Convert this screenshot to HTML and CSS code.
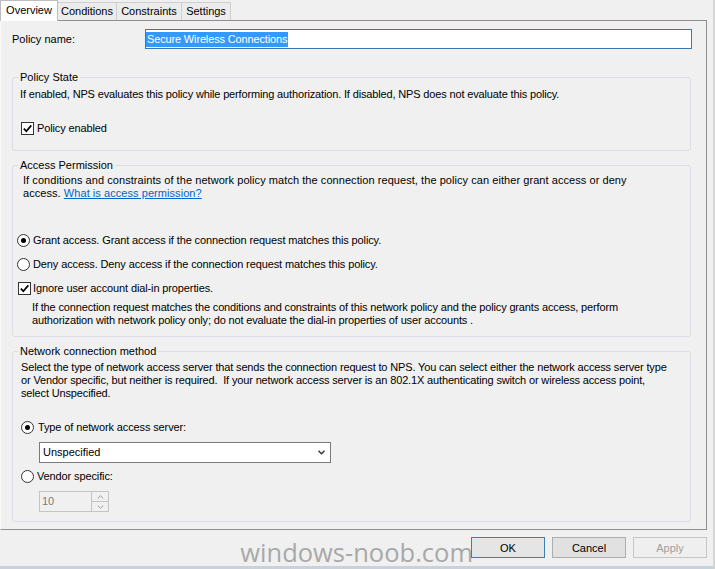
FILE: index.html
```html
<!DOCTYPE html>
<html>
<head>
<meta charset="utf-8">
<link rel="stylesheet" href="styles.css">
</head>
<body>
<div class="window">
  <div class="tabs">
    <div class="tab active t-overview">Overview</div>
    <div class="tab t-conditions">Conditions</div>
    <div class="tab t-constraints">Constraints</div>
    <div class="tab t-settings">Settings</div>
  </div>
  <div class="panel">
    <div class="name-row">
      <div class="name-label">Policy name:</div>
      <div class="textbox"><span class="sel">Secure Wireless Connections</span></div>
    </div>

    <fieldset class="group g-state">
      <legend>Policy State</legend>
      <div class="desc d-state">If enabled, NPS evaluates this policy while performing authorization. If disabled, NPS does not evaluate this policy.</div>
      <div class="opt o-enabled">
        <span class="check"><svg width="11" height="11" viewBox="0 0 11 11"><polyline points="1.8,5.6 4.3,8.2 9.3,2.4" fill="none" stroke="#000" stroke-width="1.7"/></svg></span>
        <span class="opt-label l3">Policy enabled</span>
      </div>
    </fieldset>

    <fieldset class="group g-access">
      <legend>Access Permission</legend>
      <div class="desc d-access">If conditions and constraints of the network policy match the connection request, the policy can either grant access or deny<br>access. <a class="link" href="#">What is access permission?</a></div>
      <div class="opt o-grant">
        <span class="radio on"></span>
        <span class="opt-label l3">Grant access. Grant access if the connection request matches this policy.</span>
      </div>
      <div class="opt o-deny">
        <span class="radio"></span>
        <span class="opt-label l3">Deny access. Deny access if the connection request matches this policy.</span>
      </div>
      <div class="opt o-ignore">
        <span class="check"><svg width="11" height="11" viewBox="0 0 11 11"><polyline points="1.8,5.6 4.3,8.2 9.3,2.4" fill="none" stroke="#000" stroke-width="1.7"/></svg></span>
        <span class="opt-label l2">Ignore user account dial-in properties.</span>
      </div>
      <div class="desc d-ignore">If the connection request matches the conditions and constraints of this network policy and the policy grants access, perform<br>authorization with network policy only; do not evaluate the dial-in properties of user accounts .</div>
    </fieldset>

    <fieldset class="group g-network">
      <legend>Network connection method</legend>
      <div class="desc d-network">Select the type of network access server that sends the connection request to NPS. You can select either the network access server type<br>or Vendor specific, but neither is required.&nbsp; If your network access server is an 802.1X authenticating switch or wireless access point,<br>select Unspecified.</div>
      <div class="opt o-type">
        <span class="radio on"></span>
        <span class="opt-label l4">Type of network access server:</span>
      </div>
      <div class="select">
        <span>Unspecified</span>
        <svg width="7" height="5" viewBox="0 0 7 5"><polyline points="0.5,0.8 3.5,3.8 6.5,0.8" fill="none" stroke="#333" stroke-width="1.4"/></svg>
      </div>
      <div class="opt o-vendor">
        <span class="radio"></span>
        <span class="opt-label l3">Vendor specific:</span>
      </div>
      <div class="spin">
        <div class="spin-val">10</div>
        <div class="spin-btns">
          <div class="spin-btn"><svg width="7" height="4" viewBox="0 0 7 4"><polyline points="0.8,3.4 3.5,0.8 6.2,3.4" fill="none" stroke="#9a9a9a" stroke-width="1"/></svg></div>
          <div class="spin-btn"><svg width="7" height="4" viewBox="0 0 7 4"><polyline points="0.8,0.6 3.5,3.2 6.2,0.6" fill="none" stroke="#9a9a9a" stroke-width="1"/></svg></div>
        </div>
      </div>
    </fieldset>
  </div>
  <div class="footer">
    <div class="watermark">windows-noob.com</div>
    <button class="btn default">OK</button>
    <button class="btn">Cancel</button>
    <button class="btn disabled">Apply</button>
  </div>
</div>
</body>
</html>
```

FILE: styles.css
```css
* { box-sizing: border-box; }

body {
  margin: 0;
  background: #f0f0f0;
  font-family: "Liberation Sans", Arial, sans-serif;
  font-size: 11px;
  line-height: 13px;
  color: #000;
}

.window {
  width: 715px;
  height: 569px;
  border-right: 2px solid #d6d6d6;
  border-bottom: 3px solid #c9d1db;
}

/* Tabs */
.tabs {
  display: flex;
  align-items: flex-end;
  height: 20px;
  position: relative;
  z-index: 1;
}

.tab {
  height: 18px;
  border: 1px solid #cfcfcf;
  border-bottom: none;
  background: #ececec;
  text-align: center;
  line-height: 17px;
  margin-left: -1px;
  white-space: nowrap;
}

.tab.active {
  height: 21px;
  margin-bottom: -1px;
  margin-left: 0;
  background: #fff;
  border-color: #bdbdbd;
  line-height: 19px;
  z-index: 2;
}

.t-overview { width: 58px; }
.t-conditions { width: 60px; }
.t-constraints { width: 66px; }
.t-settings { width: 50px; }

/* Panel */
.panel {
  width: 707px;
  height: 510px;
  border-top: 1px solid #8e9096;
  border-right: 1px solid #8e9096;
  border-bottom: 1px solid #8e9096;
  border-left: 1px solid #fafafa;
  padding: 8px 0 0 11px;
}

.name-row {
  display: flex;
  align-items: center;
  height: 20px;
}

.name-label { width: 133px; }

.textbox {
  width: 547px;
  height: 20px;
  border: 1px solid #3a78ae;
  background: #fff;
  display: flex;
  align-items: center;
  padding-left: 0;
}

.sel {
  background: #3399ff;
  color: #fff;
  line-height: 15px;
  padding: 0 1px;
  letter-spacing: -0.15px;
}

/* Group boxes */
.group {
  width: 679px;
  margin: 0;
  padding: 0;
  border: 1px solid #d8dee3;
  border-radius: 3px;
  min-inline-size: 0;
}

.group legend {
  margin-left: 5px;
  padding: 0 2px;
  line-height: 13px;
}

.g-state { margin-top: 22px; padding-bottom: 15px; }
.g-access { margin-top: 8px; padding-bottom: 9px; }
.g-network { margin-top: 8px; padding-bottom: 9px; }

.desc { white-space: nowrap; letter-spacing: -0.15px; }
.d-state { margin-top: 4px; padding-left: 7px; }
.d-access { margin-top: 2px; padding-left: 10px; letter-spacing: 0.06px; }
.d-ignore { margin-top: 6px; padding-left: 19px; }
.d-network { margin-top: 3px; padding-left: 8px; }

.link { color: #0066cc; text-decoration: underline; }

.opt {
  display: flex;
  align-items: center;
  height: 13px;
  white-space: nowrap;
}

.opt-label { letter-spacing: -0.12px; }

.l2 { margin-left: 2px; }
.l3 { margin-left: 3px; }
.l4 { margin-left: 4px; }

.o-enabled { margin-top: 21px; margin-left: 8px; }
.o-grant { margin-top: 34px; margin-left: 4px; }
.o-deny { margin-top: 11px; margin-left: 4px; }
.o-ignore { margin-top: 11px; margin-left: 5px; }
.o-type { margin-top: 21px; margin-left: 8px; }
.o-vendor { margin-top: 7px; margin-left: 8px; }

.check {
  width: 13px;
  height: 13px;
  border: 1px solid #333;
  background: #fff;
  display: flex;
  align-items: center;
  justify-content: center;
  flex: none;
}

.radio {
  width: 13px;
  height: 13px;
  border: 1px solid #333;
  border-radius: 50%;
  background: #fff;
  display: flex;
  align-items: center;
  justify-content: center;
  flex: none;
}

.radio.on::after {
  content: "";
  width: 5px;
  height: 5px;
  border-radius: 50%;
  background: #000;
}

.select {
  width: 292px;
  height: 21px;
  margin: 8px 0 0 26px;
  border: 1px solid #7a7a7a;
  background: #fff;
  display: flex;
  align-items: center;
  justify-content: space-between;
  padding: 0 5px 0 3px;
}

.spin {
  width: 70px;
  height: 21px;
  margin: 8px 0 0 26px;
  border: 1px solid #c4c4c4;
  background: #f0f0f0;
  display: flex;
}

.spin-val {
  flex: 1;
  color: #7c7c7c;
  padding-left: 2px;
  line-height: 19px;
}

.spin-btns {
  width: 17px;
  display: flex;
  flex-direction: column;
  border-left: 1px solid #c4c4c4;
}

.spin-btn {
  flex: 1;
  display: flex;
  align-items: center;
  justify-content: center;
}

.spin-btn + .spin-btn { border-top: 1px solid #c4c4c4; }

/* Footer */
.footer {
  width: 707px;
  display: flex;
  justify-content: flex-end;
  align-items: flex-start;
  gap: 7px;
}

.watermark {
  font-family: "Open Sans", "Liberation Sans", sans-serif;
  font-size: 25.5px;
  line-height: 25px;
  color: #a8a8a8;
  margin-top: 10px;
  margin-right: -9px;
  white-space: nowrap;
}

.btn {
  width: 74px;
  height: 21px;
  margin-top: 7px;
  border: 1px solid #adadad;
  background: #e1e1e1;
  font-family: "Liberation Sans", Arial, sans-serif;
  font-size: 11px;
  color: #000;
  padding: 0;
}

.btn.default { border-color: #3c7fb1; background: #e5e5e5; }
.btn.disabled { border-color: #c6c6c6; background: #efefef; color: #a0a0a0; }
```
